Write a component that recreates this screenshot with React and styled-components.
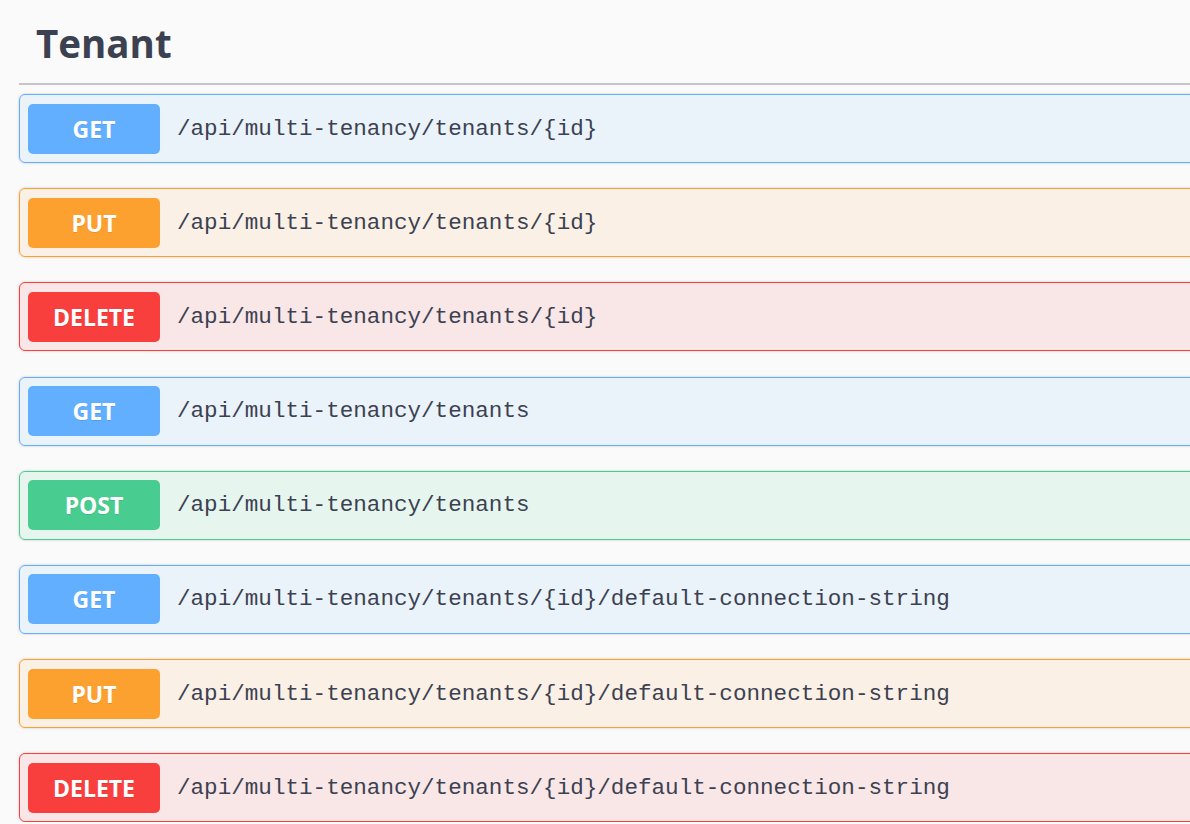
import React from 'react';
import styled, { createGlobalStyle } from 'styled-components';

const GlobalStyle = createGlobalStyle`
  html, body {
    margin: 0;
    padding: 0;
    background: #fafafa;
    overflow: hidden;
  }
`;

const methodColors = {
  GET: '#61affe',
  PUT: '#fca130',
  DELETE: '#f93e3e',
  POST: '#49cc90',
};

const Page = styled.div`
  width: 1400px;
  padding: 0 0 0 19px;
  font-family: 'Open Sans', 'Noto Sans', sans-serif;
`;

const TagHeader = styled.h3`
  margin: 0;
  height: 85px;
  display: flex;
  align-items: center;
  padding: 2px 17px 0;
  font-size: 38.5px;
  font-weight: 700;
  color: #3b4151;
  border-bottom: 2px solid rgba(59, 65, 81, 0.28);
  box-sizing: border-box;
`;

const List = styled.div`
  display: flex;
  flex-direction: column;
  gap: 25.2px;
  padding-top: 9px;
`;

const Block = styled.div`
  display: flex;
  align-items: center;
  height: 69px;
  box-sizing: border-box;
  padding: 0 8px;
  border: 1px solid ${(p) => p.$color};
  border-radius: 6px;
  background: ${(p) => p.$color}1a;
  box-shadow: 0 0 3px rgba(0, 0, 0, 0.19);
`;

const Method = styled.span`
  display: flex;
  align-items: center;
  justify-content: center;
  min-width: 132px;
  padding: 0 13px;
  box-sizing: border-box;
  height: 50px;
  border-radius: 5px;
  background: ${(p) => p.$color};
  color: #fff;
  font-size: 23px;
  font-weight: 700;
  text-shadow: 0 1px 0 rgba(0, 0, 0, 0.1);
  white-space: nowrap;
`;

const Path = styled.span`
  margin-left: 17px;
  font-family: 'Liberation Mono', monospace;
  font-size: 22.6px;
  color: #3b4151;
`;

const ops = [
  ['GET', '/api/multi-tenancy/tenants/{id}'],
  ['PUT', '/api/multi-tenancy/tenants/{id}'],
  ['DELETE', '/api/multi-tenancy/tenants/{id}'],
  ['GET', '/api/multi-tenancy/tenants'],
  ['POST', '/api/multi-tenancy/tenants'],
  ['GET', '/api/multi-tenancy/tenants/{id}/default-connection-string'],
  ['PUT', '/api/multi-tenancy/tenants/{id}/default-connection-string'],
  ['DELETE', '/api/multi-tenancy/tenants/{id}/default-connection-string'],
];

const App = () => (
  <>
    <GlobalStyle />
    <Page>
      <TagHeader>Tenant</TagHeader>
      <List>
        {ops.map(([method, path], i) => (
          <Block key={i} $color={methodColors[method]}>
            <Method $color={methodColors[method]}>{method}</Method>
            <Path>{path}</Path>
          </Block>
        ))}
      </List>
    </Page>
  </>
);

export default App;
